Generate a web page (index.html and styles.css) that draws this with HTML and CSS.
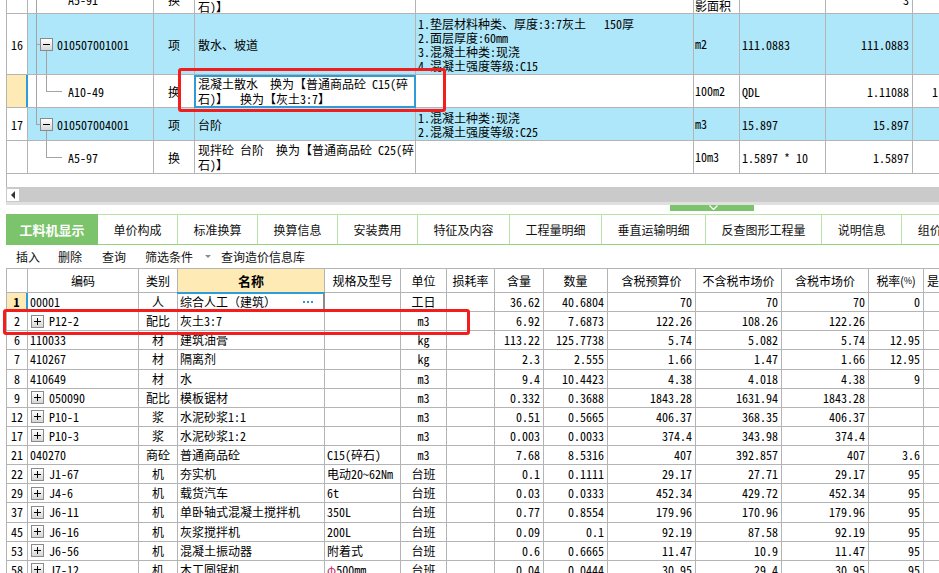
FILE: index.html
```html
<!DOCTYPE html>
<html lang="zh-CN">
<head>
<meta charset="utf-8">
<title>工料机显示</title>
<link rel="stylesheet" href="styles.css">
</head>
<body>
<div class="app">
  <section class="top-pane">
    <div class="tgrid">
      <div class="tr h-part">
        <div class="c num"></div>
        <div class="c code tree pad40"><span class="ln v8"></span><span class="ln v18t"></span><span class="ln h18"></span>A5-91</div>
        <div class="c type">换</div>
        <div class="c name">现浇砼 散水&nbsp;&nbsp;换为【普通商品砼 C15(碎<br>石)】</div>
        <div class="c feat"></div>
        <div class="c unit">投<br>影面积</div>
        <div class="c expr"></div>
        <div class="c qty">3</div>
        <div class="c last"></div>
      </div>
      <div class="tr h61 blue">
        <div class="c num">16</div>
        <div class="c code tree pad29"><span class="ln v8"></span><span class="ln h8"></span><span class="mbox"></span><span class="ln v18b"></span>010507001001</div>
        <div class="c type">项</div>
        <div class="c name">散水、坡道</div>
        <div class="c feat">1.垫层材料种类、厚度:3:7灰土&nbsp;&nbsp;&nbsp;150厚<br>2.面层厚度:60mm<br>3.混凝土种类:现浇<br>4.混凝土强度等级:C15</div>
        <div class="c unit">m2</div>
        <div class="c expr">111.0883</div>
        <div class="c qty">111.0883</div>
        <div class="c last"></div>
      </div>
      <div class="tr h33">
        <div class="c num cur"></div>
        <div class="c code tree pad40"><span class="ln v8"></span><span class="ln v18t"></span><span class="ln h18"></span>A10-49</div>
        <div class="c type">换</div>
        <div class="c name focus">混凝土散水&nbsp;&nbsp;换为【普通商品砼 C15(碎<br>石)】&nbsp;&nbsp;换为【灰土3:7】</div>
        <div class="c feat"></div>
        <div class="c unit">100m2</div>
        <div class="c expr">QDL</div>
        <div class="c qty">1.11088</div>
        <div class="c last clip">1.11088</div>
      </div>
      <div class="tr h33 blue">
        <div class="c num">17</div>
        <div class="c code tree pad29"><span class="ln v8t"></span><span class="ln h8"></span><span class="mbox"></span><span class="ln v18b"></span>010507004001</div>
        <div class="c type">项</div>
        <div class="c name">台阶</div>
        <div class="c feat">1.混凝土种类:现浇<br>2.混凝土强度等级:C25</div>
        <div class="c unit">m3</div>
        <div class="c expr">15.897</div>
        <div class="c qty">15.897</div>
        <div class="c last"></div>
      </div>
      <div class="tr h33">
        <div class="c num"></div>
        <div class="c code tree pad40"><span class="ln v18t"></span><span class="ln h18"></span>A5-97</div>
        <div class="c type">换</div>
        <div class="c name">现拌砼 台阶&nbsp;&nbsp;换为【普通商品砼 C25(碎<br>石)】</div>
        <div class="c feat"></div>
        <div class="c unit">10m3</div>
        <div class="c expr">1.5897 * 10</div>
        <div class="c qty">1.5897</div>
        <div class="c last"></div>
      </div>
    </div>
  </section>

  <div class="hscroll"><span class="hs-btn"></span></div>
  <div class="split">
    <div class="split-strip"></div>
    <div class="split-row">
      <span class="handle"><svg width="9" height="5" viewBox="0 0 9 5"><path d="M0.5 0.5 L4.5 4.5 L8.5 0.5" fill="none" stroke="#fff" stroke-width="1.2"/></svg></span>
    </div>
  </div>

  <nav class="tabs">
    <span class="tab active">工料机显示</span>
    <span class="tab">单价构成</span>
    <span class="tab">标准换算</span>
    <span class="tab">换算信息</span>
    <span class="tab">安装费用</span>
    <span class="tab">特征及内容</span>
    <span class="tab">工程量明细</span>
    <span class="tab">垂直运输明细</span>
    <span class="tab">反查图形工程量</span>
    <span class="tab">说明信息</span>
    <span class="tab">组价方案</span>
  </nav>

  <div class="toolbar">
    <span class="tb i1">插入</span>
    <span class="tb i2">删除</span>
    <span class="tb i3">查询</span>
    <span class="tb i4">筛选条件</span>
    <span class="tb-arrow"></span>
    <span class="tb">查询造价信息库</span>
  </div>

  <section class="bgrid">
    <div class="bh">
      <div class="h"></div>
      <div class="h">编码</div>
      <div class="h">类别</div>
      <div class="h hname">名称</div>
      <div class="h">规格及型号</div>
      <div class="h">单位</div>
      <div class="h">损耗率</div>
      <div class="h">含量</div>
      <div class="h">数量</div>
      <div class="h">含税预算价</div>
      <div class="h">不含税市场价</div>
      <div class="h">含税市场价</div>
      <div class="h htax">税率(<span class="pct">%</span>)</div>
      <div class="h hl">是否</div>
    </div>

    <div class="br">
      <div class="d num cur b">1</div>
      <div class="d code">00001</div>
      <div class="d type">人</div>
      <div class="d name edit">综合人工（建筑）<span class="dots"><i></i><i></i><i></i></span></div>
      <div class="d spec"></div>
      <div class="d unit">工日</div>
      <div class="d n"></div>
      <div class="d n">36.62</div>
      <div class="d n">40.6804</div>
      <div class="d n">70</div>
      <div class="d n">70</div>
      <div class="d n">70</div>
      <div class="d n">0</div>
      <div class="d"></div>
    </div>
    <div class="br">
      <div class="d num">2</div>
      <div class="d code"><span class="pbox"></span>P12-2</div>
      <div class="d type">配比</div>
      <div class="d name">灰土3:7</div>
      <div class="d spec"></div>
      <div class="d unit">m3</div>
      <div class="d n"></div>
      <div class="d n">6.92</div>
      <div class="d n">7.6873</div>
      <div class="d n">122.26</div>
      <div class="d n">108.26</div>
      <div class="d n">122.26</div>
      <div class="d n"></div>
      <div class="d"></div>
    </div>
    <div class="br">
      <div class="d num">6</div>
      <div class="d code">110033</div>
      <div class="d type">材</div>
      <div class="d name">建筑油膏</div>
      <div class="d spec"></div>
      <div class="d unit">kg</div>
      <div class="d n"></div>
      <div class="d n">113.22</div>
      <div class="d n">125.7738</div>
      <div class="d n">5.74</div>
      <div class="d n">5.082</div>
      <div class="d n">5.74</div>
      <div class="d n">12.95</div>
      <div class="d"></div>
    </div>
    <div class="br">
      <div class="d num">7</div>
      <div class="d code">410267</div>
      <div class="d type">材</div>
      <div class="d name">隔离剂</div>
      <div class="d spec"></div>
      <div class="d unit">kg</div>
      <div class="d n"></div>
      <div class="d n">2.3</div>
      <div class="d n">2.555</div>
      <div class="d n">1.66</div>
      <div class="d n">1.47</div>
      <div class="d n">1.66</div>
      <div class="d n">12.95</div>
      <div class="d"></div>
    </div>
    <div class="br">
      <div class="d num">8</div>
      <div class="d code">410649</div>
      <div class="d type">材</div>
      <div class="d name">水</div>
      <div class="d spec"></div>
      <div class="d unit">m3</div>
      <div class="d n"></div>
      <div class="d n">9.4</div>
      <div class="d n">10.4423</div>
      <div class="d n">4.38</div>
      <div class="d n">4.018</div>
      <div class="d n">4.38</div>
      <div class="d n">9</div>
      <div class="d"></div>
    </div>
    <div class="br">
      <div class="d num">9</div>
      <div class="d code"><span class="pbox"></span>050090</div>
      <div class="d type">配比</div>
      <div class="d name">模板锯材</div>
      <div class="d spec"></div>
      <div class="d unit">m3</div>
      <div class="d n"></div>
      <div class="d n">0.332</div>
      <div class="d n">0.3688</div>
      <div class="d n">1843.28</div>
      <div class="d n">1631.94</div>
      <div class="d n">1843.28</div>
      <div class="d n"></div>
      <div class="d"></div>
    </div>
    <div class="br">
      <div class="d num">12</div>
      <div class="d code"><span class="pbox"></span>P10-1</div>
      <div class="d type">浆</div>
      <div class="d name">水泥砂浆1:1</div>
      <div class="d spec"></div>
      <div class="d unit">m3</div>
      <div class="d n"></div>
      <div class="d n">0.51</div>
      <div class="d n">0.5665</div>
      <div class="d n">406.37</div>
      <div class="d n">368.35</div>
      <div class="d n">406.37</div>
      <div class="d n"></div>
      <div class="d"></div>
    </div>
    <div class="br">
      <div class="d num">17</div>
      <div class="d code"><span class="pbox"></span>P10-3</div>
      <div class="d type">浆</div>
      <div class="d name">水泥砂浆1:2</div>
      <div class="d spec"></div>
      <div class="d unit">m3</div>
      <div class="d n"></div>
      <div class="d n">0.003</div>
      <div class="d n">0.0033</div>
      <div class="d n">374.4</div>
      <div class="d n">343.98</div>
      <div class="d n">374.4</div>
      <div class="d n"></div>
      <div class="d"></div>
    </div>
    <div class="br">
      <div class="d num">21</div>
      <div class="d code">040270</div>
      <div class="d type">商砼</div>
      <div class="d name">普通商品砼</div>
      <div class="d spec">C15(碎石)</div>
      <div class="d unit">m3</div>
      <div class="d n"></div>
      <div class="d n">7.68</div>
      <div class="d n">8.5316</div>
      <div class="d n">407</div>
      <div class="d n">392.857</div>
      <div class="d n">407</div>
      <div class="d n">3.6</div>
      <div class="d"></div>
    </div>
    <div class="br">
      <div class="d num">22</div>
      <div class="d code"><span class="pbox"></span>J1-67</div>
      <div class="d type">机</div>
      <div class="d name">夯实机</div>
      <div class="d spec">电动20~62Nm</div>
      <div class="d unit">台班</div>
      <div class="d n"></div>
      <div class="d n">0.1</div>
      <div class="d n">0.1111</div>
      <div class="d n">29.17</div>
      <div class="d n">27.71</div>
      <div class="d n">29.17</div>
      <div class="d n">95</div>
      <div class="d"></div>
    </div>
    <div class="br">
      <div class="d num">29</div>
      <div class="d code"><span class="pbox"></span>J4-6</div>
      <div class="d type">机</div>
      <div class="d name">载货汽车</div>
      <div class="d spec">6t</div>
      <div class="d unit">台班</div>
      <div class="d n"></div>
      <div class="d n">0.03</div>
      <div class="d n">0.0333</div>
      <div class="d n">452.34</div>
      <div class="d n">429.72</div>
      <div class="d n">452.34</div>
      <div class="d n">95</div>
      <div class="d"></div>
    </div>
    <div class="br">
      <div class="d num">37</div>
      <div class="d code"><span class="pbox"></span>J6-11</div>
      <div class="d type">机</div>
      <div class="d name">单卧轴式混凝土搅拌机</div>
      <div class="d spec">350L</div>
      <div class="d unit">台班</div>
      <div class="d n"></div>
      <div class="d n">0.77</div>
      <div class="d n">0.8554</div>
      <div class="d n">179.96</div>
      <div class="d n">170.96</div>
      <div class="d n">179.96</div>
      <div class="d n">95</div>
      <div class="d"></div>
    </div>
    <div class="br">
      <div class="d num">45</div>
      <div class="d code"><span class="pbox"></span>J6-16</div>
      <div class="d type">机</div>
      <div class="d name">灰浆搅拌机</div>
      <div class="d spec">200L</div>
      <div class="d unit">台班</div>
      <div class="d n"></div>
      <div class="d n">0.09</div>
      <div class="d n">0.1</div>
      <div class="d n">92.19</div>
      <div class="d n">87.58</div>
      <div class="d n">92.19</div>
      <div class="d n">95</div>
      <div class="d"></div>
    </div>
    <div class="br">
      <div class="d num">53</div>
      <div class="d code"><span class="pbox"></span>J6-56</div>
      <div class="d type">机</div>
      <div class="d name">混凝土振动器</div>
      <div class="d spec">附着式</div>
      <div class="d unit">台班</div>
      <div class="d n"></div>
      <div class="d n">0.6</div>
      <div class="d n">0.6665</div>
      <div class="d n">11.47</div>
      <div class="d n">10.9</div>
      <div class="d n">11.47</div>
      <div class="d n">95</div>
      <div class="d"></div>
    </div>
    <div class="br">
      <div class="d num">58</div>
      <div class="d code"><span class="pbox"></span>J7-12</div>
      <div class="d type">机</div>
      <div class="d name">木工圆锯机</div>
      <div class="d spec"><span class="phi">φ</span>500mm</div>
      <div class="d unit">台班</div>
      <div class="d n"></div>
      <div class="d n">0.04</div>
      <div class="d n">0.0444</div>
      <div class="d n">30.95</div>
      <div class="d n">29.4</div>
      <div class="d n">30.95</div>
      <div class="d n">95</div>
      <div class="d"></div>
    </div>
  </section>

  <div class="mark mark-top"></div>
  <div class="mark mark-bottom"></div>
</div>
</body>
</html>
```
FILE: styles.css
```css
* { box-sizing: border-box; margin: 0; padding: 0; }
html, body { width: 939px; height: 573px; overflow: hidden; background: #fff; }
body {
  font-family: "Noto Sans Mono CJK SC", "Noto Sans CJK SC", sans-serif;
  font-size: 12px;
  color: #000;
}
.app { position: relative; width: 939px; height: 573px; }

/* ---------- top grid ---------- */
.top-pane {
  height: 187px;
  margin-left: 6px;
  border-left: 1px solid #b4b4b4;
  overflow: hidden;
}
.tgrid { margin-top: -15px; }
.tr {
  display: grid;
  grid-template-columns: 21px 126px 41px 221px 278px 46px 86px 87px 1fr;
  border-bottom: 1px solid #b4b4b4;
}
.h-part { height: 29px; }
.h61 { height: 61px; }
.h33 { height: 33px; }
.c {
  position: relative;
  display: flex;
  align-items: center;
  border-right: 1px solid #b4b4b4;
  padding: 0 2px;
  line-height: 15px;
  white-space: nowrap;
  overflow: hidden;
}
.tr.blue .c:not(.num) { background: #aee7f9; }
.c.num { justify-content: center; padding: 0; }
.c.num.cur { background: #fdeab4; border-right: 2px solid #2e9cd6; }
.c.type { justify-content: center; }
.c.name { padding-left: 3px; }
.c.feat { line-height: 14px; padding-left: 2px; padding-top: 2px; }
.c.unit { padding-left: 1px; line-height: 14px; }
.c.expr { padding-left: 2px; }
.c.qty { justify-content: flex-end; padding-right: 3px; }
.c.last { border-right: none; }
.c.clip { padding-left: 19px; }
.c.focus { overflow: visible; z-index: 2; }
.c.focus::after {
  content: "";
  position: absolute;
  left: -1px; top: 0; right: -1px; bottom: -1px;
  border: 2px solid #2e9cd6;
  pointer-events: none;
}
.tree.pad29 { padding-left: 29px; }
.tree.pad40 { padding-left: 40px; }
.ln { position: absolute; background: #a3a3a3; }
.v8 { left: 8px; top: 0; bottom: 0; width: 1px; }
.v8t { left: 8px; top: 0; height: 50%; width: 1px; }
.h8 { left: 8px; top: 50%; width: 4px; height: 1px; }
.v18b { left: 18px; top: calc(50% + 7px); bottom: 0; width: 1px; }
.v18t { left: 18px; top: 0; height: 50%; width: 1px; }
.h18 { left: 18px; top: 50%; width: 16px; height: 1px; }
.mbox {
  position: absolute;
  left: 12px; top: 50%;
  margin-top: -6px;
  width: 13px; height: 13px;
  border: 1px solid #8a8a8a;
  background: linear-gradient(#ffffff, #d6d6d6);
}
.mbox::before {
  content: "";
  position: absolute;
  left: 2px; top: 5px;
  width: 7px; height: 1px;
  background: #000;
}

/* ---------- scrollbar & splitter ---------- */
.hscroll {
  margin-left: 6px;
  height: 15px;
  background: #cacaca;
  display: flex;
  align-items: center;
}
.hs-btn {
  position: relative;
  width: 12px; height: 12px;
  margin-left: 1px;
  background: #fff;
}
.hs-btn::before {
  content: "";
  position: absolute;
  left: 4px; top: 2px;
  border-top: 4px solid transparent;
  border-bottom: 4px solid transparent;
  border-right: 4px solid #333;
}
.split { height: 12px; }
.split-strip { margin-left: 6px; height: 3px; background: #e0e0e0; }
.split-row { height: 9px; display: flex; align-items: flex-start; }
.handle {
  margin-left: 670px;
  width: 84px; height: 6px;
  background: #7cc46b;
  display: flex;
  justify-content: center;
  align-items: flex-start;
}
.handle svg { display: block; margin-left: 3px; }

/* ---------- tabs ---------- */
.tabs {
  display: flex;
  margin-left: 6px;
  height: 31px;
  border-top: 1px solid #b9e3a6;
  border-bottom: 1px solid #98d27f;
  white-space: nowrap;
  font-family: "Noto Sans CJK SC", sans-serif;
  font-size: 12px;
}
.tab {
  flex: none;
  display: flex;
  align-items: center;
  padding: 0 15.5px;
  border-right: 1px solid #b9e3a6;
  color: #111;
}
.tab.active {
  width: 92px;
  margin: -1px 0;
  padding: 0;
  justify-content: center;
  border-right: none;
  background: #7cc46b;
  color: #fff;
  font-weight: bold;
  font-size: 13px;
}

/* ---------- toolbar ---------- */
.toolbar {
  height: 23px;
  display: flex;
  align-items: center;
  padding-left: 16px;
  font-family: "Noto Sans CJK SC", sans-serif;
  font-size: 12px;
  color: #111;
}
.tb { flex: none; }
.i1 { margin-right: 18px; }
.i2 { margin-right: 20px; }
.i3 { margin-right: 19px; }
.i4 { margin-right: 12px; }
.tb-arrow {
  width: 0; height: 0;
  margin-right: 10px;
  border-left: 3px solid transparent;
  border-right: 3px solid transparent;
  border-top: 3px solid #8a8a8a;
}

/* ---------- bottom grid ---------- */
.bgrid { margin-left: 6px; border-left: 1px solid #b4b4b4; }
.bh, .br {
  display: grid;
  grid-template-columns: 21px 111px 39px 147px 76px 46px 48px 49px 64px 88px 86px 87px 55px 1fr;
  border-bottom: 1px solid #b4b4b4;
}
.bh {
  height: 25px;
  border-top: 1px solid #b4b4b4;
  font-family: "Noto Sans CJK SC", sans-serif;
}
.h {
  display: flex;
  align-items: center;
  justify-content: center;
  border-right: 1px solid #b4b4b4;
  white-space: nowrap;
  overflow: hidden;
}
.h.hname { background: #fdeab4; font-weight: bold; font-size: 13px; }
.h.htax { padding: 0; letter-spacing: -0.3px; }
.h .pct { font-size: 9px; }
.h.hl { border-right: none; justify-content: flex-start; padding-left: 3px; }
.br { height: 19.14px; }
.d {
  position: relative;
  display: flex;
  align-items: center;
  border-right: 1px solid #b4b4b4;
  padding: 0 2px;
  line-height: 14px;
  white-space: nowrap;
  overflow: hidden;
}
.d:last-child { border-right: none; }
.d.num { justify-content: center; padding: 0; }
.d.num.cur { background: #fdeab4; border-right: 2px solid #2e9cd6; }
.d.b { font-weight: bold; }
.d.type { justify-content: center; }
.d.unit { justify-content: center; }
.d.n { justify-content: flex-end; padding-right: 3px; }
.d.name { padding-left: 2px; }
.d.edit { overflow: visible; z-index: 2; }
.d.edit::after {
  content: "";
  position: absolute;
  left: -1px; top: -1px; right: -1px; bottom: -1px;
  border-top: 2px solid #2e9cd6;
  border-right: 2px solid #8c8c8c;
  border-bottom: 1px solid #8c8c8c;
  pointer-events: none;
}
.dots { margin-left: auto; margin-right: 9px; display: flex; gap: 2px; }
.dots i { display: block; width: 2px; height: 2px; background: #3b8fd2; }
.pbox {
  position: relative;
  flex: none;
  width: 13px; height: 13px;
  margin: 0 5px 0 1px;
  border: 1px solid #8a8a8a;
  background: linear-gradient(#ffffff, #d6d6d6);
}
.pbox::before, .pbox::after {
  content: "";
  position: absolute;
  background: #000;
}
.pbox::before { left: 2px; top: 5px; width: 7px; height: 1px; }
.pbox::after { left: 5px; top: 2px; width: 1px; height: 7px; }
.phi { color: #c0306a; }

/* ---------- annotation marks ---------- */
.mark {
  position: absolute;
  border: 3px solid #f21d1d;
  border-radius: 3px;
  pointer-events: none;
  z-index: 5;
}
.mark-top { left: 178px; top: 68px; width: 268px; height: 44px; }
.mark-bottom { left: 3px; top: 309px; width: 467px; height: 26px; }
```
